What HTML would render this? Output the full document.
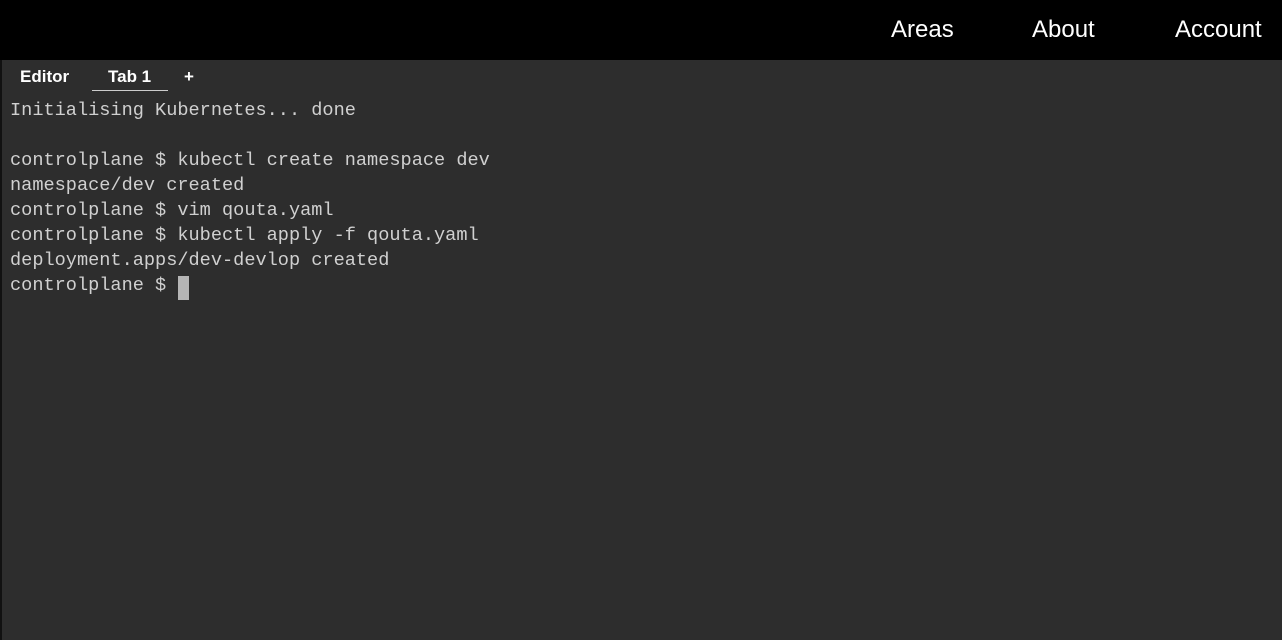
<!DOCTYPE html>
<html><head><meta charset="utf-8"><style>
html,body{margin:0;padding:0;width:1282px;height:640px;overflow:hidden;background:#2d2d2d;}
.top{position:absolute;left:0;top:0;width:1282px;height:60px;background:#000;}
.nav{position:absolute;top:16px;color:#fff;font-family:"Liberation Sans",sans-serif;font-size:24px;}
.main{position:absolute;left:0;top:60px;width:1282px;height:580px;background:#2d2d2d;border-left:2px solid #111;box-sizing:border-box;}
.tab{position:absolute;top:67px;color:#fff;font-family:"Liberation Sans",sans-serif;font-size:17px;font-weight:bold;}
.ul{position:absolute;left:92px;top:90px;width:76px;height:1px;background:#ccc;}
pre{position:absolute;left:10px;top:98px;margin:0;font-family:"Liberation Mono",monospace;font-size:18.6px;line-height:25px;color:#d0d0d0;}
.cur{position:absolute;left:178px;top:276px;width:11px;height:24px;background:#b5b5b5;}
</style></head><body>
<div class="top"></div>
<div class="nav" style="left:891px">Areas</div>
<div class="nav" style="left:1032px">About</div>
<div class="nav" style="left:1175px">Account</div>
<div class="main"></div>
<div class="tab" style="left:20px">Editor</div>
<div class="tab" style="left:108px">Tab 1</div>
<div class="tab" style="left:184px">+</div>
<div class="ul"></div>
<pre>Initialising Kubernetes... done

controlplane $ kubectl create namespace dev
namespace/dev created
controlplane $ vim qouta.yaml
controlplane $ kubectl apply -f qouta.yaml
deployment.apps/dev-devlop created
controlplane $ </pre>
<div class="cur"></div>
</body></html>
